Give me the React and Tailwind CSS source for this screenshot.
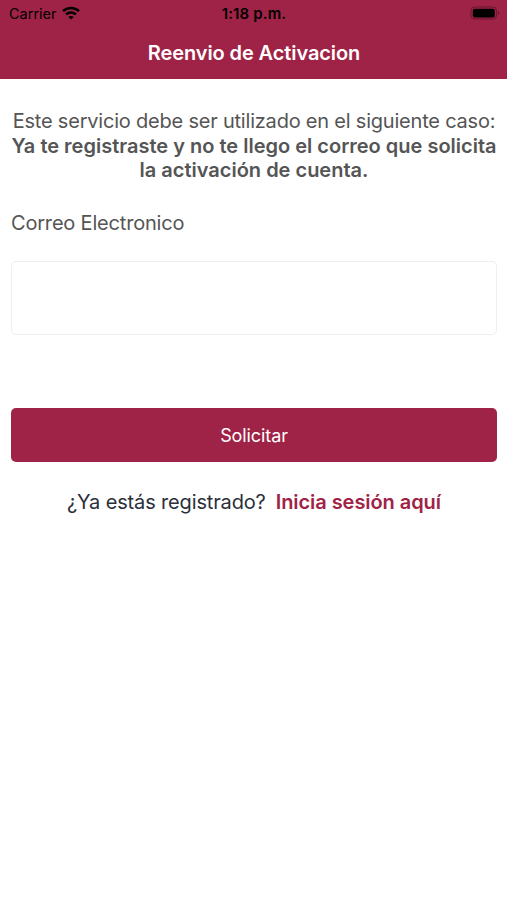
const WifiIcon = () => (
  <svg className="mb-[2px] h-[14px] w-[18px]" viewBox="0 0 18 14" fill="none" stroke="currentColor" strokeWidth="2.5">
    <path d="M1 5.2C5.4.9 12.6.9 17 5.2" />
    <path d="M4 8.4c2.8-2.6 7.2-2.6 10 0" />
    <path d="M9 13.6 6.3 10.9c1.5-1.3 3.9-1.3 5.4 0Z" fill="currentColor" stroke="none" />
  </svg>
);

const BatteryIcon = () => (
  <svg className="mb-px h-[14px] w-[30px]" viewBox="0 0 30 14" fill="none">
    <rect x="1" y="1" width="25.5" height="12" rx="3.5" stroke="#000" strokeOpacity="0.35" />
    <rect x="2.8" y="2.8" width="22" height="8.6" rx="2" fill="#000" />
    <path d="M28 5c1.5.8 1.5 3.3 0 4.1Z" fill="#000" fillOpacity="0.4" />
  </svg>
);

function StatusBar() {
  return (
    <div className="grid h-[27px] grid-cols-3 items-center pr-[7px] pl-[8px] text-black">
      <div className="flex items-center gap-[5px] pl-px text-[14.5px]">
        <span>Carrier</span>
        <WifiIcon />
      </div>
      <span className="pt-[2px] text-center text-[15px] font-semibold tracking-[0.15px]">1:18 p.m.</span>
      <div className="flex justify-end">
        <BatteryIcon />
      </div>
    </div>
  );
}

export default function App() {
  return (
    <div className="min-h-screen bg-white font-['Inter',sans-serif] text-[#555]">
      <header className="h-[79px] bg-[#9f2347]">
        <StatusBar />
        <h1 className="pt-[12px] pl-px text-center text-[20px] leading-[28px] font-semibold tracking-[-0.1px] text-white">
          Reenvio de Activacion
        </h1>
      </header>

      <main className="pt-[30px] pr-[10px] pl-[11px]">
        <p className="text-center text-[20px] leading-[24.5px] whitespace-nowrap">
          <span className="tracking-[-0.21px]">Este servicio debe ser utilizado en el siguiente caso:</span>
          <strong className="block font-semibold">
            Ya te registraste y no te llego el correo que solicita
            <br />
            la activación de cuenta.
          </strong>
        </p>

        <form>
          <label htmlFor="email" className="mt-[28px] block text-[20px] leading-[24px] tracking-[-0.19px]">
            Correo Electronico
          </label>
          <input
            id="email"
            type="email"
            className="mt-[26px] block h-[74px] w-full rounded-[5px] border border-[#eee] px-4 text-[20px] outline-none"
          />
          <button
            type="button"
            className="mt-[73px] block h-[54px] w-full rounded-[5px] bg-[#9f2347] pt-px text-[18px] tracking-[-0.1px] text-white"
          >
            Solicitar
          </button>
        </form>

        <p className="mt-[27px] flex justify-center gap-[10px] text-[20px] leading-[26px] text-[#2b2f3a]">
          <span className="tracking-[-0.15px]">¿Ya estás registrado?</span>
          <a className="font-semibold tracking-[-0.06px] text-[#9f2347]">Inicia sesión aquí</a>
        </p>
      </main>
    </div>
  );
}
